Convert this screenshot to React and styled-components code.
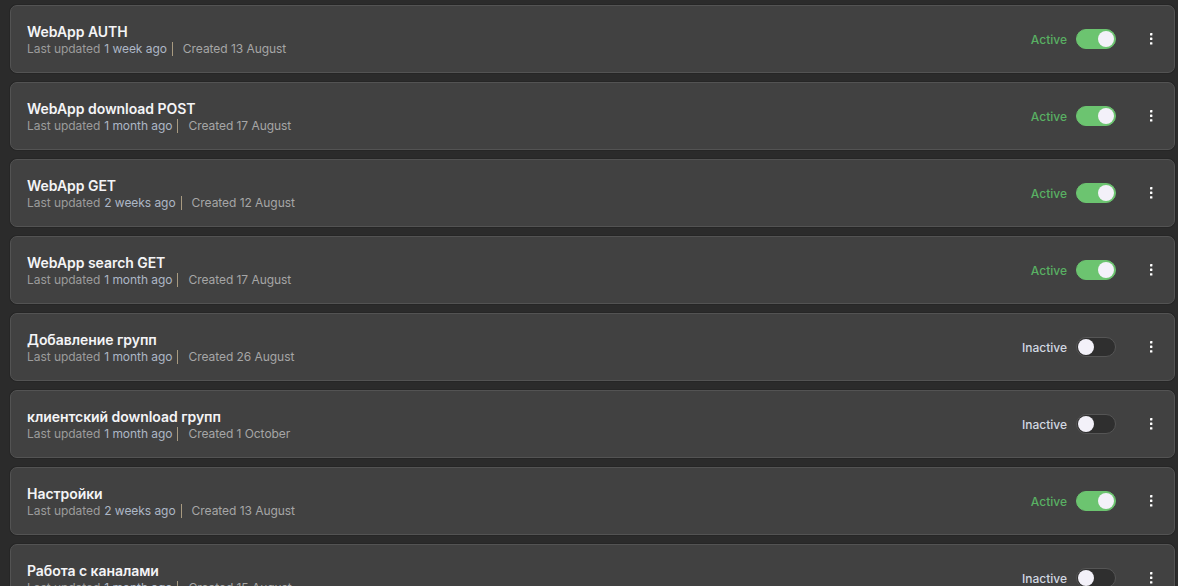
import React from "react";
import styled, { createGlobalStyle } from "styled-components";

const Global = createGlobalStyle`
  html, body { margin: 0; padding: 0; background: #2b2b2b; overflow: hidden; }
  body { font-family: Inter, "Noto Sans", sans-serif; }
  * { box-sizing: border-box; }
`;

const List = styled.div`
  display: flex;
  flex-direction: column;
  gap: 9px;
  padding: 5px 3px 0 10px;
`;

const Card = styled.div`
  display: flex;
  align-items: center;
  justify-content: space-between;
  height: 68px;
  padding: 0 11px 0 16px;
  background: #414141;
  border: 1px solid #535353;
  border-radius: 7px;
  box-shadow: 0 0 0 1px #262626;
  flex-shrink: 0;
`;

const Info = styled.div`
  display: flex;
  flex-direction: column;
  padding-top: 2px;
`;

const Title = styled.div`
  font-size: 14px;
  line-height: 18px;
  font-weight: 600;
  color: #f4f4f6;
  letter-spacing: -0.05px;
`;

const Meta = styled.div`
  display: flex;
  align-items: center;
  font-size: 12px;
  line-height: 16px;
  color: #9c9c9c;
  letter-spacing: -0.05px;
`;

const Value = styled.span`
  color: #adb7c6;
  margin-left: 4px;
`;

const Sep = styled.span`
  display: inline-block;
  width: 1px;
  height: 14px;
  background: #a89a80;
  margin: 0 10px 0 5px;
`;

const Created = styled.span`
  color: #a6a6a6;
`;

const Controls = styled.div`
  display: flex;
  align-items: center;
`;

const Status = styled.span`
  font-size: 12px;
  font-weight: 500;
  color: ${(p) => (p.$on ? "#59b063" : "#d2d8e2")};
  margin-right: 9px;
`;

const Track = styled.div`
  position: relative;
  width: 40px;
  height: 20px;
  border-radius: 10px;
  background: ${(p) => (p.$on ? "#6cc470" : "#2f2f2f")};
  border: 1px solid ${(p) => (p.$on ? "#6cc470" : "#555555")};
`;

const Knob = styled.div`
  position: absolute;
  top: 1px;
  left: ${(p) => (p.$on ? "21px" : "1px")};
  width: 16px;
  height: 16px;
  border-radius: 50%;
  background: #f3f1f9;
`;

const MenuButton = styled.button`
  display: flex;
  align-items: center;
  justify-content: center;
  width: 24px;
  height: 24px;
  margin-left: 23px;
  padding: 0;
  background: transparent;
  border: none;
  color: #ffffff;
`;

const Kebab = () => (
  <svg width="4" height="14" viewBox="0 0 4 14">
    <rect x="1" y="1" width="2.4" height="2.4" rx="0.4" fill="currentColor" />
    <rect x="1" y="5.6" width="2.4" height="2.4" rx="0.4" fill="currentColor" />
    <rect x="1" y="10.2" width="2.4" height="2.4" rx="0.4" fill="currentColor" />
  </svg>
);

const items = [
  { title: "WebApp AUTH", upd: "1 week ago", created: "13 August", on: true },
  { title: "WebApp download POST", upd: "1 month ago", created: "17 August", on: true },
  { title: "WebApp GET", upd: "2 weeks ago", created: "12 August", on: true },
  { title: "WebApp search GET", upd: "1 month ago", created: "17 August", on: true },
  { title: "Добавление групп", upd: "1 month ago", created: "26 August", on: false },
  { title: "клиентский download групп", upd: "1 month ago", created: "1 October", on: false },
  { title: "Настройки", upd: "2 weeks ago", created: "13 August", on: true },
  { title: "Работа с каналами", upd: "1 month ago", created: "15 August", on: false },
];

export default function App() {
  return (
    <>
      <Global />
      <List>
        {items.map((it) => (
          <Card key={it.title}>
            <Info>
              <Title>{it.title}</Title>
              <Meta>
                Last updated<Value>{it.upd}</Value>
                <Sep />
                <Created>Created {it.created}</Created>
              </Meta>
            </Info>
            <Controls>
              <Status $on={it.on}>{it.on ? "Active" : "Inactive"}</Status>
              <Track $on={it.on}>
                <Knob $on={it.on} />
              </Track>
              <MenuButton>
                <Kebab />
              </MenuButton>
            </Controls>
          </Card>
        ))}
      </List>
    </>
  );
}
